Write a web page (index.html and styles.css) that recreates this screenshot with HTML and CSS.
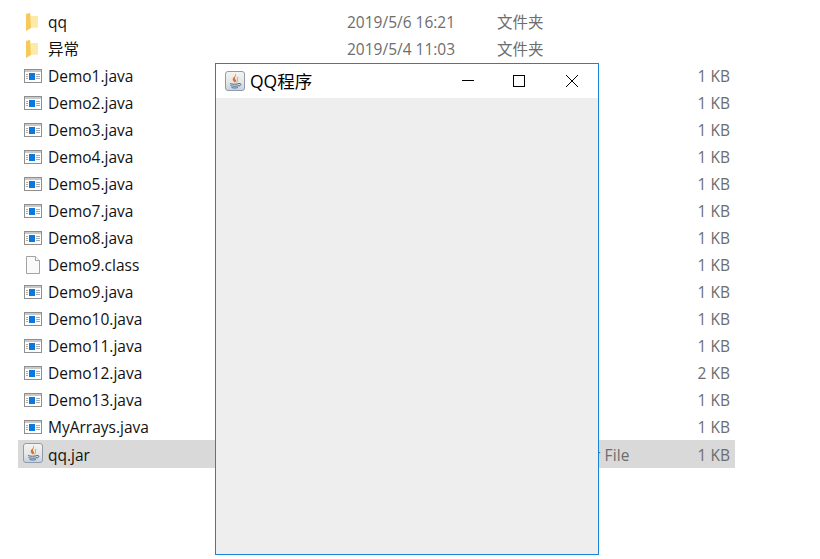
FILE: index.html
```html
<!DOCTYPE html>
<html lang="zh-CN">
<head>
    <meta charset="UTF-8">
    <title>QQ程序</title>
    <link rel="stylesheet" href="styles.css">
</head>
<body>
    <svg class="defs" width="0" height="0">
        <defs>
            <linearGradient id="jar-bg" x1="0" y1="0" x2="0" y2="1">
                <stop offset="0" stop-color="#f4f4f2"/>
                <stop offset="0.55" stop-color="#e6e6e4"/>
                <stop offset="1" stop-color="#c4d2e2"/>
            </linearGradient>
        </defs>
        <symbol id="i-folder" viewBox="0 0 12 18">
            <path d="M0 1 L4 0 L5 3 L12 3 L12 14.5 L4 15 L0 18 Z" fill="#fde9a8"/>
            <path d="M0 1 L4 0 L5 15 L0 18 Z" fill="#f5c95c"/>
        </symbol>
        <symbol id="i-java" viewBox="0 0 18 14">
            <rect x="0.5" y="0.5" width="17" height="13" fill="#fff" stroke="#8f8f8f"/>
            <rect x="1" y="1" width="16" height="2" fill="#c9c9c9"/>
            <rect x="5" y="4" width="6" height="7" fill="#0a78dc"/>
            <path d="M2 5.5H4M2 7.5H4M2 9.5H4M12 5.5H16M12 7.5H16M12 9.5H16" stroke="#a9a9a9"/>
        </symbol>
        <symbol id="i-file" viewBox="0 0 14 18">
            <path d="M0.5 0.5 H9.5 L13.5 4.5 V17.5 H0.5 Z" fill="#fafafa" stroke="#a3a3a3"/>
            <path d="M9.5 0.5 V4.5 H13.5" fill="#fff" stroke="#a3a3a3"/>
        </symbol>
        <symbol id="i-jar" viewBox="0 0 20 20">
            <rect x="0.5" y="0.5" width="19" height="19" rx="2.5" fill="url(#jar-bg)" stroke="#8f9cab"/>
            <path d="M10.5 2.5 C12.5 5 8.5 6 10.5 8.5 C11.5 9.5 11 10.5 10 11.5 C7.5 10 7 8 8.5 6.5 C9.5 5.5 11 4.5 10.5 2.5 Z" fill="#d9702a"/>
            <path d="M13 6 C11.5 7.5 13.5 9 11.5 11.5" fill="none" stroke="#e39a5c"/>
            <path d="M5 12.5 C7 13.5 12 13.5 14 12.5 M5.5 14.5 C8 15.5 12 15.5 14 14.5 M6.5 16.5 C8.5 17.2 11 17.2 13 16.5" fill="none" stroke="#4f6f90"/>
            <path d="M14 12.5 C16.5 12 16.5 14.5 14 15" fill="none" stroke="#4f6f90"/>
        </symbol>
    </svg>

    <div class="file-list">
        <div class="row">
            <span class="icon"><svg class="ic-folder"><use href="#i-folder"/></svg></span>
            <span class="name">qq</span><span class="date">2019/5/6 16:21</span><span class="type">文件夹</span><span class="size"></span>
        </div>
        <div class="row">
            <span class="icon"><svg class="ic-folder"><use href="#i-folder"/></svg></span>
            <span class="name">异常</span><span class="date">2019/5/4 11:03</span><span class="type">文件夹</span><span class="size"></span>
        </div>
        <div class="row">
            <span class="icon"><svg class="ic-java"><use href="#i-java"/></svg></span>
            <span class="name">Demo1.java</span><span class="date"></span><span class="type"></span><span class="size">1 KB</span>
        </div>
        <div class="row">
            <span class="icon"><svg class="ic-java"><use href="#i-java"/></svg></span>
            <span class="name">Demo2.java</span><span class="date"></span><span class="type"></span><span class="size">1 KB</span>
        </div>
        <div class="row">
            <span class="icon"><svg class="ic-java"><use href="#i-java"/></svg></span>
            <span class="name">Demo3.java</span><span class="date"></span><span class="type"></span><span class="size">1 KB</span>
        </div>
        <div class="row">
            <span class="icon"><svg class="ic-java"><use href="#i-java"/></svg></span>
            <span class="name">Demo4.java</span><span class="date"></span><span class="type"></span><span class="size">1 KB</span>
        </div>
        <div class="row">
            <span class="icon"><svg class="ic-java"><use href="#i-java"/></svg></span>
            <span class="name">Demo5.java</span><span class="date"></span><span class="type"></span><span class="size">1 KB</span>
        </div>
        <div class="row">
            <span class="icon"><svg class="ic-java"><use href="#i-java"/></svg></span>
            <span class="name">Demo7.java</span><span class="date"></span><span class="type"></span><span class="size">1 KB</span>
        </div>
        <div class="row">
            <span class="icon"><svg class="ic-java"><use href="#i-java"/></svg></span>
            <span class="name">Demo8.java</span><span class="date"></span><span class="type"></span><span class="size">1 KB</span>
        </div>
        <div class="row">
            <span class="icon"><svg class="ic-file"><use href="#i-file"/></svg></span>
            <span class="name">Demo9.class</span><span class="date"></span><span class="type"></span><span class="size">1 KB</span>
        </div>
        <div class="row">
            <span class="icon"><svg class="ic-java"><use href="#i-java"/></svg></span>
            <span class="name">Demo9.java</span><span class="date"></span><span class="type"></span><span class="size">1 KB</span>
        </div>
        <div class="row">
            <span class="icon"><svg class="ic-java"><use href="#i-java"/></svg></span>
            <span class="name">Demo10.java</span><span class="date"></span><span class="type"></span><span class="size">1 KB</span>
        </div>
        <div class="row">
            <span class="icon"><svg class="ic-java"><use href="#i-java"/></svg></span>
            <span class="name">Demo11.java</span><span class="date"></span><span class="type"></span><span class="size">1 KB</span>
        </div>
        <div class="row">
            <span class="icon"><svg class="ic-java"><use href="#i-java"/></svg></span>
            <span class="name">Demo12.java</span><span class="date"></span><span class="type"></span><span class="size">2 KB</span>
        </div>
        <div class="row">
            <span class="icon"><svg class="ic-java"><use href="#i-java"/></svg></span>
            <span class="name">Demo13.java</span><span class="date"></span><span class="type"></span><span class="size">1 KB</span>
        </div>
        <div class="row">
            <span class="icon"><svg class="ic-java"><use href="#i-java"/></svg></span>
            <span class="name">MyArrays.java</span><span class="date"></span><span class="type"></span><span class="size">1 KB</span>
        </div>
        <div class="row selected">
            <span class="icon"><svg class="ic-jar"><use href="#i-jar"/></svg></span>
            <span class="name">qq.jar</span><span class="date"></span><span class="type">Executable Jar File</span><span class="size">1 KB</span>
        </div>
    </div>

    <div class="window">
        <div class="titlebar">
            <svg class="ic-jar"><use href="#i-jar"/></svg>
            <span class="title">QQ程序</span>
            <div class="controls">
                <svg class="ctl ctl-min" viewBox="0 0 12 12"><path d="M0 5.5H12" stroke="#000"/></svg>
                <svg class="ctl" viewBox="0 0 12 12"><rect x="0.5" y="0.5" width="11" height="11" fill="none" stroke="#000"/></svg>
                <svg class="ctl" viewBox="0 0 12 12"><path d="M0 0L12 12M12 0L0 12" stroke="#000"/></svg>
            </div>
        </div>
        <div class="content"></div>
    </div>
</body>
</html>
```

FILE: styles.css
```css
html, body {
    height: 100%;
}
body {
    margin: 0;
    background: #fff;
    font-family: "Open Sans", "Noto Sans CJK SC", sans-serif;
    font-size: 15.5px;
    overflow: hidden;
}
.defs {
    display: block;
    height: 0;
}
.file-list {
    width: 717px;
    margin-left: 18px;
    padding-top: 8px;
}
.row {
    display: grid;
    grid-template-columns: 30px 299px 150px 133px 100px;
    align-items: center;
    height: 27px;
    color: #6d6d6d;
}
.row.selected {
    box-sizing: border-box;
    height: 28px;
    padding-top: 1px;
    background: #d9d9d9;
}
.row.selected .type {
    letter-spacing: 0.12px;
}
.icon {
    display: flex;
    justify-content: center;
    align-items: center;
}
.name {
    color: #111;
}
.date, .type {
    white-space: nowrap;
}
.size {
    text-align: right;
}
.ic-folder {
    width: 12px;
    height: 18px;
    margin-right: 2px;
}
.ic-java {
    width: 18px;
    height: 14px;
}
.ic-file {
    width: 14px;
    height: 18px;
}
.ic-jar {
    width: 20px;
    height: 20px;
}
.row .ic-jar {
    margin-top: -3px;
}
.window {
    position: absolute;
    left: 215px;
    top: 63px;
    width: 382px;
    height: 490px;
    display: flex;
    flex-direction: column;
    border: 1px solid #1883d7;
    background: #fff;
}
.titlebar {
    display: flex;
    align-items: center;
    height: 34px;
    padding-left: 9px;
}
.title {
    margin-left: 5px;
    margin-top: -2px;
    font-size: 17.5px;
    color: #000;
}
.controls {
    display: flex;
    gap: 41px;
    margin-left: auto;
    padding-right: 20px;
}
.ctl {
    width: 12px;
    height: 12px;
}
.ctl-min {
    margin-right: -2px;
}
.content {
    flex: 1;
    background: #eeeeee;
}
```
